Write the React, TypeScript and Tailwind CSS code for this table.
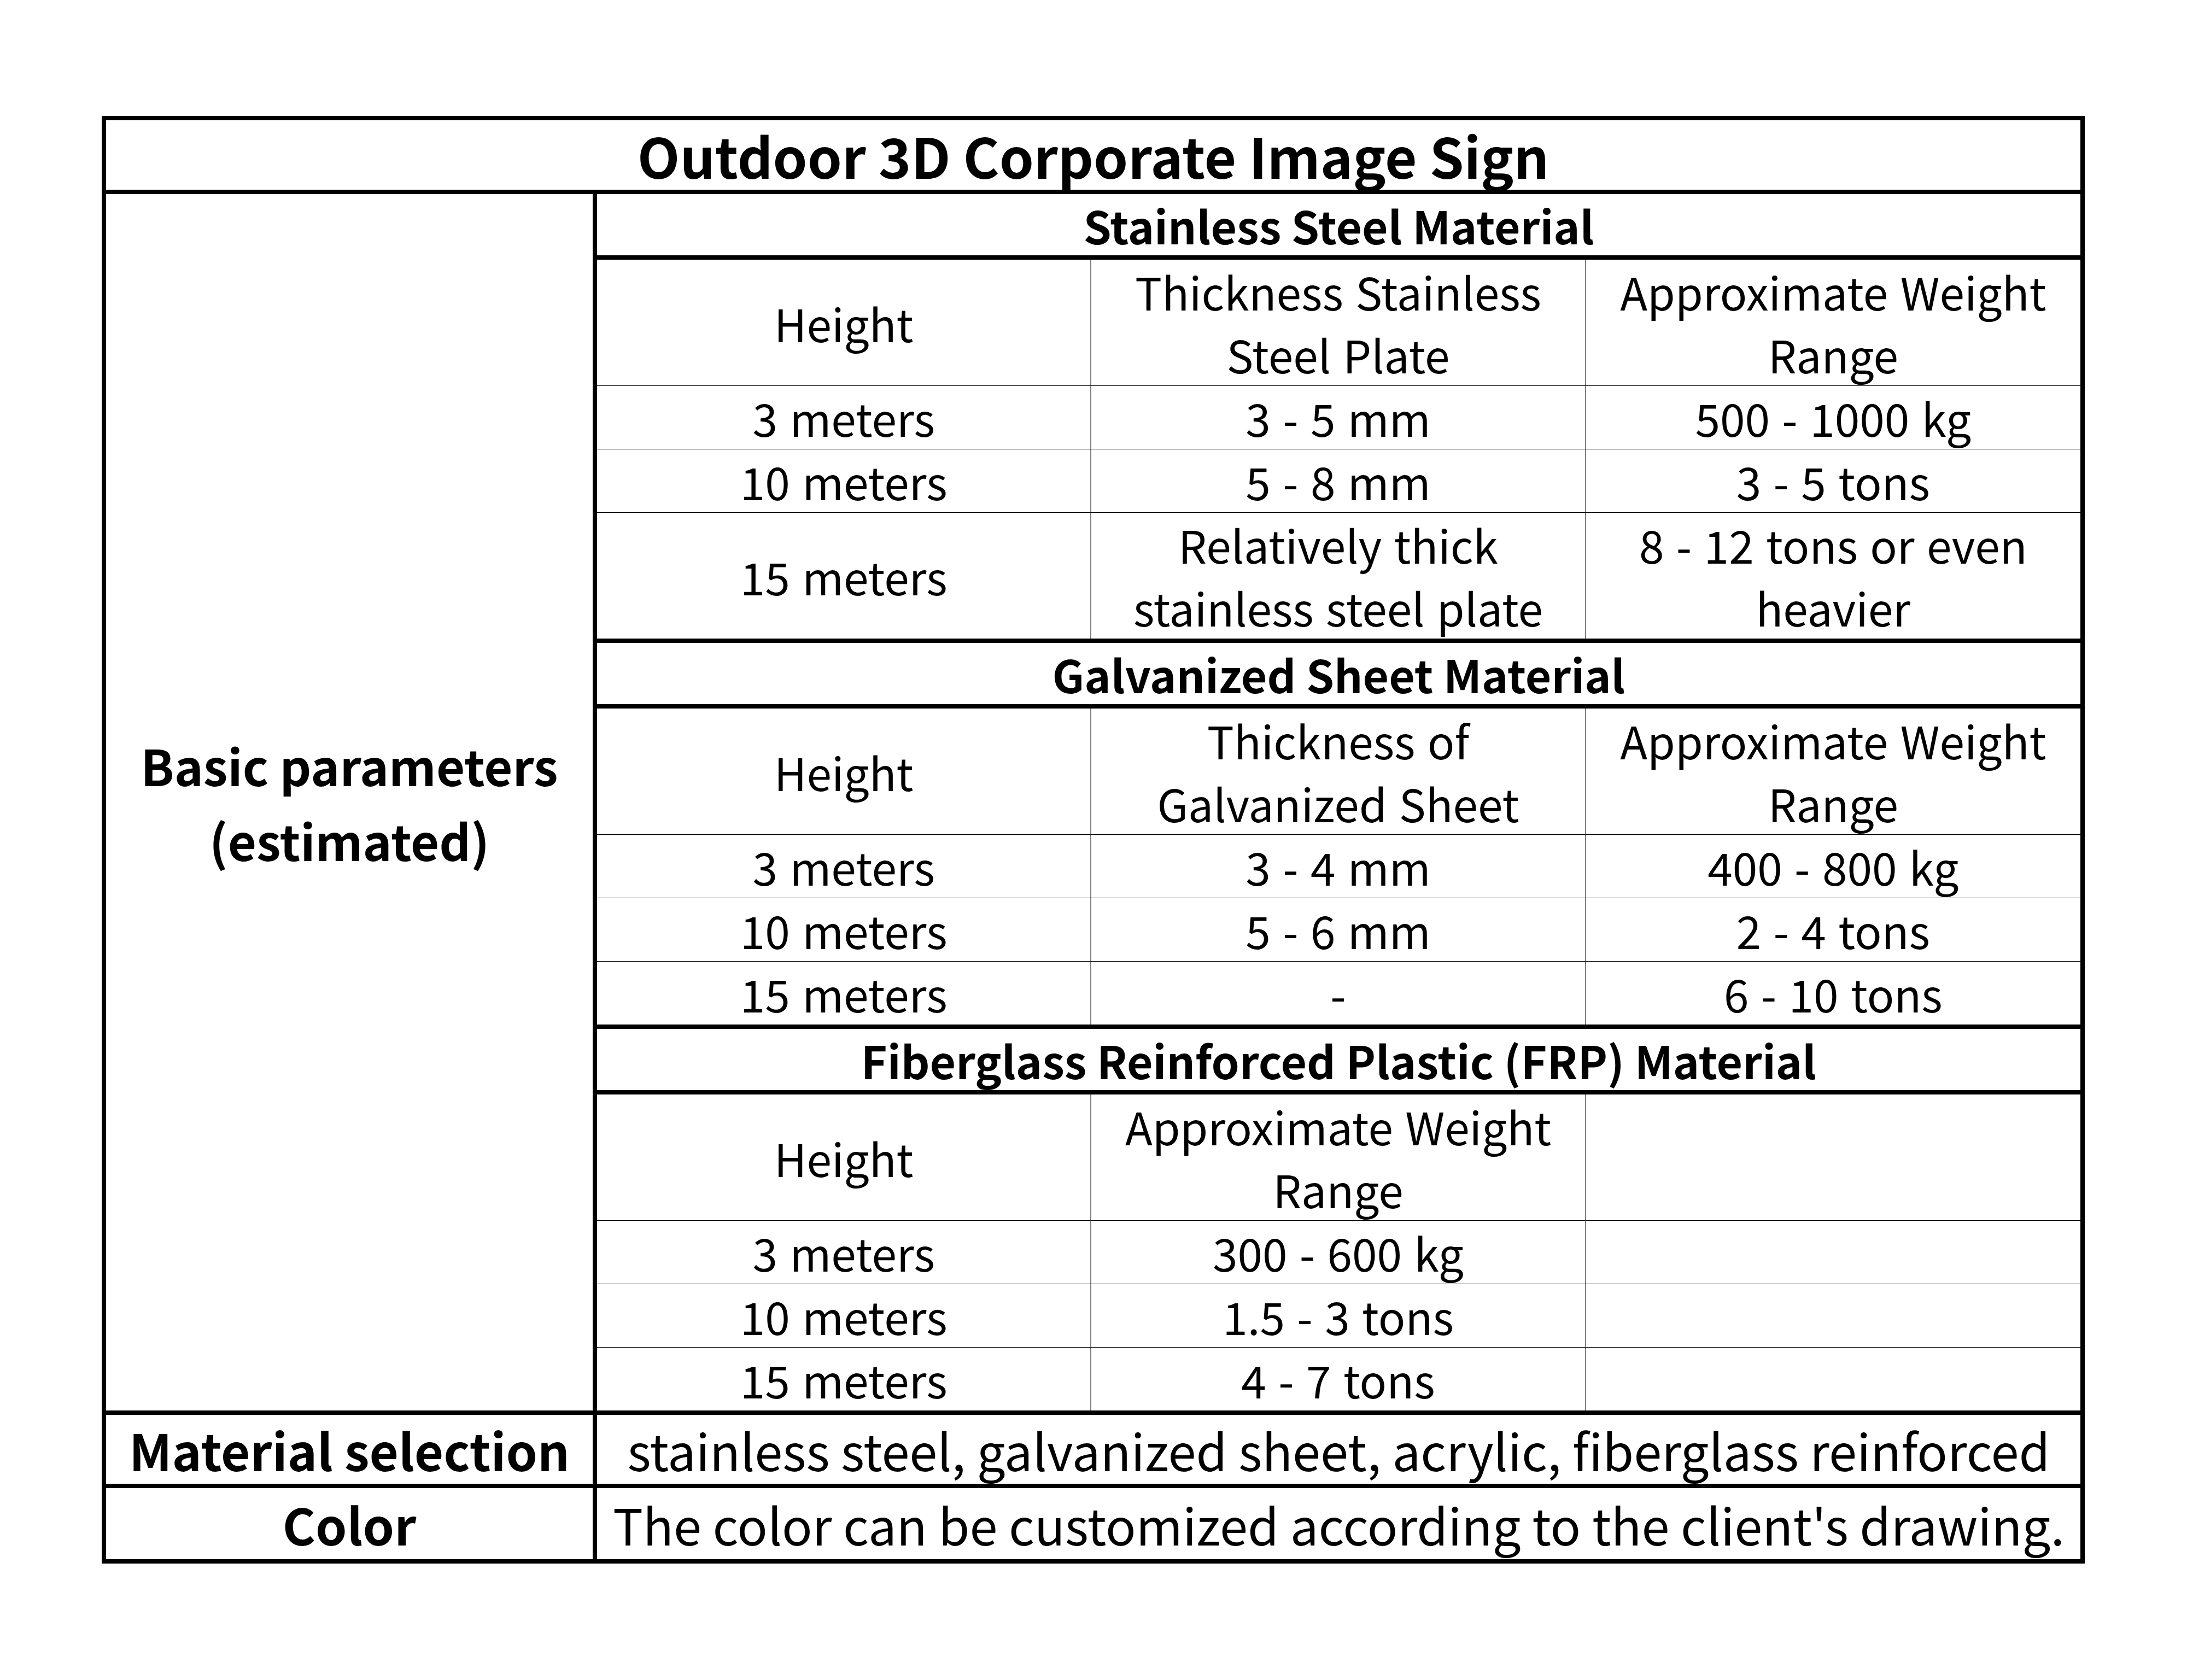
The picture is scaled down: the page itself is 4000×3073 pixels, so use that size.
const sections = [
  {
    title: 'Stainless Steel Material',
    head: ['Height', 'Thickness Stainless\nSteel Plate', 'Approximate Weight\nRange'],
    rows: [
      ['3 meters', '3 - 5 mm', '500 - 1000 kg'],
      ['10 meters', '5 - 8 mm', '3 - 5 tons'],
      ['15 meters', 'Relatively thick\nstainless steel plate', '8 - 12 tons or even\nheavier'],
    ],
  },
  {
    title: 'Galvanized Sheet Material',
    head: ['Height', 'Thickness of\nGalvanized Sheet', 'Approximate Weight\nRange'],
    rows: [
      ['3 meters', '3 - 4 mm', '400 - 800 kg'],
      ['10 meters', '5 - 6 mm', '2 - 4 tons'],
      ['15 meters', '-', '6 - 10 tons'],
    ],
  },
  {
    title: 'Fiberglass Reinforced Plastic (FRP) Material',
    head: ['Height', 'Approximate Weight\nRange', ''],
    rows: [
      ['3 meters', '300 - 600 kg', ''],
      ['10 meters', '1.5 - 3 tons', ''],
      ['15 meters', '4 - 7 tons', ''],
    ],
  },
];

function Row({ cells, last }: { cells: string[]; last?: boolean }) {
  const tall = cells.some((c) => c.includes('\n'));
  return (
    <div
      className={`box-content grid grid-cols-3 ${tall ? 'h-[230px]' : 'h-[115px]'} ${last ? '' : 'border-b border-black'}`}
    >
      {cells.map((c, i) => (
        <div
          key={i}
          className={`flex flex-col items-center justify-center text-center ${i < 2 ? 'border-r-2 border-[#808080]' : ''}`}
        >
          {c.split('\n').map((line, j) => (
            <span key={j} className="block whitespace-nowrap leading-[115px] [word-spacing:4px]">
              {line}
            </span>
          ))}
        </div>
      ))}
    </div>
  );
}

export default function App() {
  return (
    <div className="min-h-screen bg-white pt-[212px] pl-[186px] font-['Noto_Sans_CJK_SC',sans-serif] text-black">
      <div className="w-[3627px] border-[8px] border-black">
        {/* Titulo */}
        <div className="flex h-[135px] items-center justify-center border-b-[8px] border-black text-[101px] font-bold">
          Outdoor 3D Corporate Image Sign
        </div>

        {/* Parametros */}
        <div className="flex border-b-[8px] border-black">
          <div className="flex w-[898px] shrink-0 flex-col items-center justify-center border-r-[8px] border-black text-center text-[90px] font-bold leading-[137px]">
            <span>Basic parameters</span>
            <span>(estimated)</span>
          </div>
          <div className="flex flex-1 flex-col text-[82px]">
            {sections.map((s, si) => (
              <div key={s.title} className={si < sections.length - 1 ? 'border-b-[8px] border-black' : ''}>
                <div className="flex h-[120px] items-center justify-center border-b-[8px] border-black text-[82px] font-bold">
                  {s.title}
                </div>
                <Row cells={s.head} />
                {s.rows.map((r, ri) => (
                  <Row key={ri} cells={r} last={ri === s.rows.length - 1} />
                ))}
              </div>
            ))}
          </div>
        </div>

        {/* Material */}
        <div className="box-content flex h-[126px] border-b-[8px] border-black">
          <div className="flex w-[898px] shrink-0 items-center justify-center border-r-[8px] border-black text-[92px] font-bold">
            Material selection
          </div>
          <div className="flex flex-1 items-center justify-center whitespace-nowrap text-[92px]">
            stainless steel, galvanized sheet, acrylic, fiberglass reinforced
          </div>
        </div>

        {/* Cor */}
        <div className="flex h-[130px]">
          <div className="flex w-[898px] shrink-0 items-center justify-center border-r-[8px] border-black text-[92px] font-bold">
            Color
          </div>
          <div className="flex flex-1 items-center justify-center whitespace-nowrap text-[92px]">
            The color can be customized according to the client's drawing.
          </div>
        </div>
      </div>
    </div>
  );
}
